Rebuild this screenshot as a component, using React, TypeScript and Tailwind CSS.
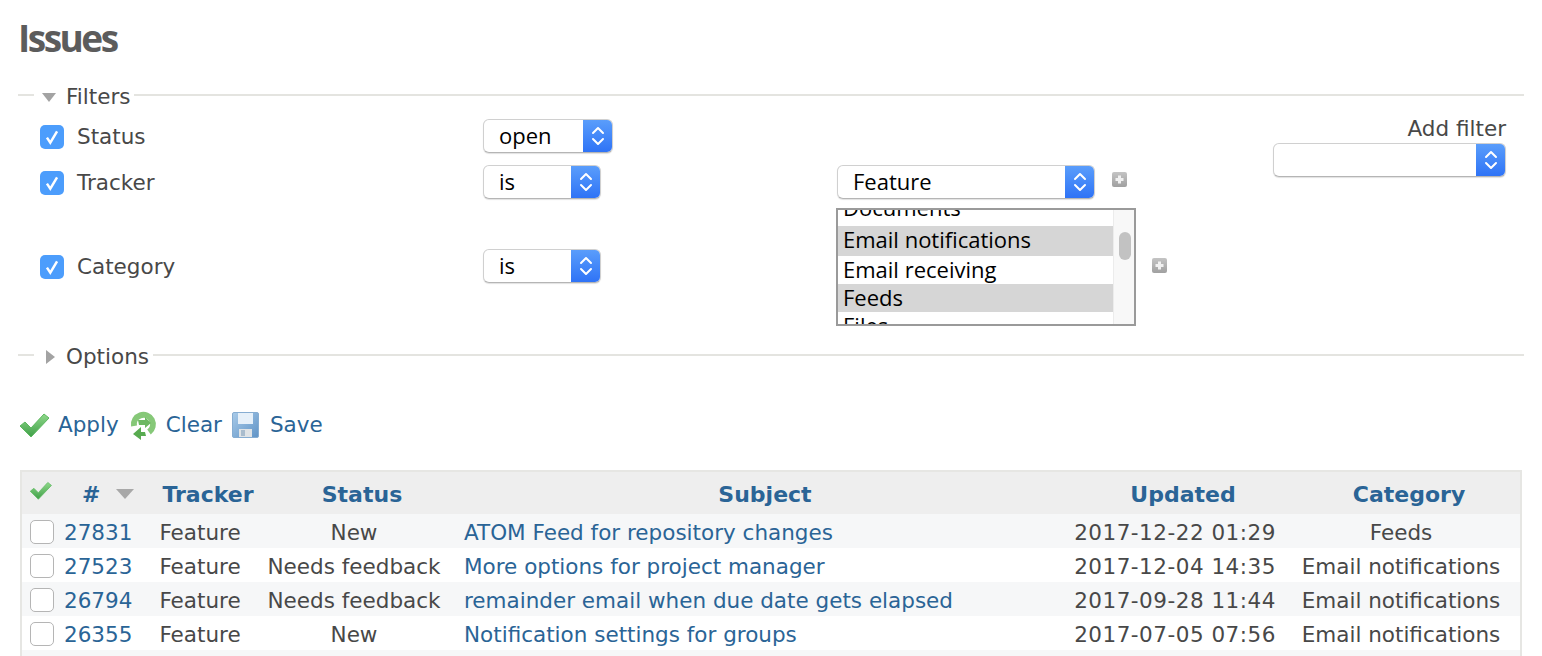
import type { ReactNode } from 'react';

const rows = [
  { id: '27831', status: 'New', subject: 'ATOM Feed for repository changes', updated: '2017-12-22 01:29', category: 'Feeds' },
  { id: '27523', status: 'Needs feedback', subject: 'More options for project manager', updated: '2017-12-04 14:35', category: 'Email notifications' },
  { id: '26794', status: 'Needs feedback', subject: 'remainder email when due date gets elapsed', updated: '2017-09-28 11:44', category: 'Email notifications' },
  { id: '26355', status: 'New', subject: 'Notification settings for groups', updated: '2017-07-05 07:56', category: 'Email notifications' },
];

function CheckIcon({ className }: { className: string }) {
  return (
    <svg viewBox="0 0 30 26" className={className}>
      <defs>
        <linearGradient id="tick" x1="0" y1="0" x2="0" y2="1">
          <stop offset="0" stopColor="#8fd88a" />
          <stop offset="1" stopColor="#3f9f48" />
        </linearGradient>
      </defs>
      <path d="M1 14 L6 10 L12 16 L25 2 L30 6 L12 25 Z" fill="url(#tick)" stroke="#5cb85f" strokeWidth="1" strokeLinejoin="round" />
    </svg>
  );
}

function ReloadIcon() {
  return (
    <svg viewBox="0 0 27 29" className="w-[27px] h-[29px]">
      <path d="M4 15 A9.5 9.5 0 1 1 19 21" fill="none" stroke="#86c878" strokeWidth="6" />
      <path d="M15 21 H11 V16 L3 23 L11 29 V25 H16 Z" fill="#58ab50" />
      <path d="M8 9 H15 V6 L21 12 L15 17 V14 H9 Z" fill="#6db862" />
    </svg>
  );
}

function SaveIcon() {
  return (
    <svg viewBox="0 0 27 26" className="w-[27px] h-[26px]">
      <defs>
        <linearGradient id="disk" x1="0" y1="0" x2="1" y2="1">
          <stop offset="0" stopColor="#a9cbe9" />
          <stop offset="1" stopColor="#5f93c6" />
        </linearGradient>
      </defs>
      <rect x="0.5" y="0.5" width="26" height="25" rx="1.5" fill="url(#disk)" stroke="#86add2" />
      <rect x="6" y="1" width="15" height="11" fill="#e6f0f9" />
      <rect x="7" y="17" width="13" height="8" fill="#dfe3e6" />
      <rect x="9" y="18" width="4" height="6" fill="#a9bccd" />
    </svg>
  );
}

function Disclosure({ open }: { open: boolean }) {
  return open ? (
    <svg viewBox="0 0 14 11" className="w-[14px] h-[11px] -ml-[3px]">
      <path d="M0 1 H14 L7 10 Z" fill="#a3a3a3" />
    </svg>
  ) : (
    <svg viewBox="0 0 11 14" className="w-[11px] h-[14px]">
      <path d="M1 0 V14 L10 7 Z" fill="#a3a3a3" />
    </svg>
  );
}

function Legend({ open, children }: { open: boolean; children: ReactNode }) {
  return (
    <div className="flex items-center h-[28px]">
      <div className="w-[16px] h-[2px] bg-[#e4e4e0]" />
      <div className="w-[32px] pt-[4px] flex justify-center">
        <Disclosure open={open} />
      </div>
      <span className="pt-[4px] leading-[22px] text-[#484848]">{children}</span>
      <div className="flex-1 ml-[4px] h-[2px] bg-[#e4e4e0]" />
    </div>
  );
}

function Select({ label, width }: { label: string; width: string }) {
  return (
    <div className={`${width} h-[34px] flex rounded-[6px] bg-white border border-[#d0d0d0] border-b-[#b5b5b5] shadow-[0_1px_1px_rgba(0,0,0,0.12)] overflow-hidden`}>
      <span className="flex-1 pl-[15px] leading-[31px] text-black text-[22px] font-['Open_Sans','Liberation_Sans',sans-serif]">{label}</span>
      <span className="w-[29px] flex items-center justify-center bg-gradient-to-b from-[#5a9dfb] to-[#2f73f6]">
        <svg viewBox="0 0 16 24" className="w-[16px] h-[24px]" fill="none" stroke="white" strokeWidth="2" strokeLinecap="round" strokeLinejoin="round">
          <path d="M3 9 L8 4 L13 9" />
          <path d="M3 15 L8 20 L13 15" />
        </svg>
      </span>
    </div>
  );
}

function Box() {
  return (
    <span className="w-[24px] h-[24px] rounded-[5px] bg-[#4c9dfc] flex items-center justify-center">
      <svg viewBox="0 0 16 16" className="w-[18px] h-[18px]" fill="none" stroke="white" strokeWidth="2.2">
        <path d="M3.5 8.5 L6.5 13 L12.5 3" />
      </svg>
    </span>
  );
}

function Plus() {
  return (
    <span className="w-[15px] h-[15px] rounded-[2px] bg-gradient-to-b from-[#c4c4c4] to-[#a0a0a0] flex items-center justify-center">
      <svg viewBox="0 0 9 9" className="w-[9px] h-[9px]">
        <path d="M3 0.5 H6 V3 H8.5 V6 H6 V8.5 H3 V6 H0.5 V3 H3 Z" fill="#f1f1f1" />
      </svg>
    </span>
  );
}

function ListBox() {
  return (
    <div className="relative w-[300px] h-[118px] border-2 border-[#9a9a9a] overflow-hidden text-black text-[22px] font-['Open_Sans','Liberation_Sans',sans-serif]">
      <div className="-mt-[16px] mr-[21px] leading-[26px]">
        <div className="h-[32px] pl-[5px]">Documents</div>
        <div className="h-[30px] pl-[5px] bg-[#d6d6d6]">Email notifications</div>
        <div className="h-[28px] pl-[5px]">Email receiving</div>
        <div className="h-[28px] pl-[5px] bg-[#d6d6d6]">Feeds</div>
        <div className="h-[28px] pl-[5px]">Files</div>
      </div>
      <div className="absolute top-0 right-0 bottom-0 w-[21px] bg-[#f8f8f8] border-l border-[#ececec]">
        <div className="mt-[22px] ml-[5px] w-[12px] h-[28px] rounded-[6px] bg-[#c2c2c2]" />
      </div>
    </div>
  );
}

function FilterLabel({ children }: { children: ReactNode }) {
  return (
    <div className="w-[465px] pl-[22px] pt-[2px] flex items-center">
      <Box />
      <span className="ml-[13px] text-[#484848]">{children}</span>
    </div>
  );
}

function Th({ children, className }: { children: ReactNode; className: string }) {
  return <th className={`font-bold text-[22px] leading-[36px] pt-[4px] text-[#2a6496] text-center ${className}`}>{children}</th>;
}

export default function App() {
  return (
    <div className="w-[1542px] h-[656px] overflow-hidden bg-white text-[21.5px] text-[#484848] font-['DejaVu_Sans',sans-serif]">
      <div className="pl-[18px] pr-[18px]">
        <h2 className="pt-[13px] h-[81px] text-[37px] leading-[50px] font-bold tracking-[-2.5px] text-[#5c5c5c] font-['Open_Sans',sans-serif]">Issues</h2>

        <Legend open>Filters</Legend>

        <div className="flex">
          {/* Filter rows */}
          <div className="flex-1">
            <div className="mt-[10px] h-[46px] flex items-start">
              <div className="flex h-[34px]">
                <FilterLabel>Status</FilterLabel>
                <Select label="open" width="w-[130px]" />
              </div>
            </div>
            <div className="h-[43px] flex items-start">
              <div className="flex h-[34px]">
                <FilterLabel>Tracker</FilterLabel>
                <Select label="is" width="w-[118px]" />
                <div className="w-[236px]" />
                <Select label="Feature" width="w-[258px]" />
                <div className="ml-[17px] mt-[7px]">
                  <Plus />
                </div>
              </div>
            </div>
            <div className="flex h-[118px]">
              <div className="flex items-center h-[116px]">
                <FilterLabel>Category</FilterLabel>
                <Select label="is" width="w-[118px]" />
              </div>
              <div className="w-[235px]" />
              <ListBox />
              <div className="ml-[16px] mt-[50px]">
                <Plus />
              </div>
            </div>
          </div>

          {/* Add filter */}
          <div className="w-[250px] pt-[6px] pr-[18px] flex flex-col items-end">
            <span className="text-[#484848] leading-[28px]">Add filter</span>
            <Select label="" width="w-[233px]" />
          </div>
        </div>

        <div className="mt-[15px]">
          <Legend open={false}>Options</Legend>
        </div>

        <div className="mt-[40px] h-[32px] flex items-center text-[#2a6496]">
          <CheckIcon className="w-[30px] h-[26px] ml-[1px]" />
          <span className="ml-[9px]">Apply</span>
          <div className="ml-[11px]"><ReloadIcon /></div>
          <span className="ml-[9px]">Clear</span>
          <div className="ml-[10px]"><SaveIcon /></div>
          <span className="ml-[11px]">Save</span>
        </div>

        {/* Issue list */}
        <div className="mt-[29px] ml-[2px] w-[1502px] border-2 border-b-0 border-[#e6e6e3]">
          <table className="w-[1498px] table-fixed border-collapse">
            <colgroup>
              <col className="w-[36px]" />
              <col className="w-[80px]" />
              <col className="w-[124px]" />
              <col className="w-[184px]" />
              <col className="w-[622px]" />
              <col className="w-[214px]" />
              <col className="w-[238px]" />
            </colgroup>
            <thead>
              <tr className="h-[42px] bg-[#eeeeee]">
                <th className="text-left pl-[7px] align-top pt-[9px]">
                  <CheckIcon className="w-[23px] h-[19px]" />
                </th>
                <Th className="text-left">
                  <div className="flex items-center pl-[24px]">
                    <span>#</span>
                    <svg viewBox="0 0 18 12" className="ml-[16px] -mt-[3px] w-[18px] h-[12px]">
                      <path d="M0 1 H18 L9 11 Z" fill="#a8a8a8" />
                    </svg>
                  </div>
                </Th>
                <Th className="pl-[16px]">Tracker</Th>
                <Th className="pl-[16px]">Status</Th>
                <Th className="pl-[16px]">Subject</Th>
                <Th className="pl-[16px]">Updated</Th>
                <Th className="pl-[16px]">Category</Th>
              </tr>
            </thead>
            <tbody className="leading-[28px]">
              {rows.map((row, i) => (
                <tr key={row.id} className={`h-[34px] ${i % 2 === 0 ? 'bg-[#f6f7f8]' : 'bg-white'}`}>
                  <td className="pl-[8px] pt-[2px]">
                    <span className="block w-[24px] h-[24px] rounded-[5px] bg-white border border-[#b5b5b5]" />
                  </td>
                  <td className="pl-[6px] pt-[4px] text-[#2a6496]">{row.id}</td>
                  <td className="pt-[4px] text-center">Feature</td>
                  <td className="pt-[4px] text-center">{row.status}</td>
                  <td className="pl-[18px] pt-[4px] text-[#2a6496]">{row.subject}</td>
                  <td className="pt-[4px] text-center tracking-[0.5px]">{row.updated}</td>
                  <td className="pt-[4px] text-center">{row.category}</td>
                </tr>
              ))}
              <tr className="h-[34px] bg-[#f6f7f8]">
                <td colSpan={7} />
              </tr>
            </tbody>
          </table>
        </div>
      </div>
    </div>
  );
}
